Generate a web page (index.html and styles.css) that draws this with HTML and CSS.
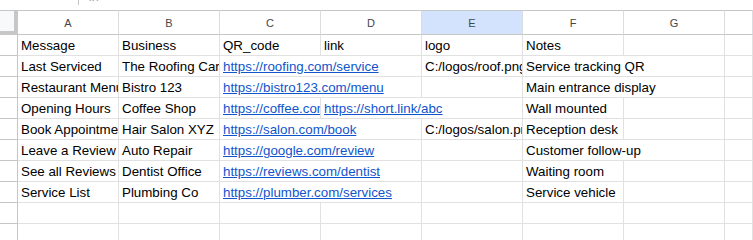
FILE: index.html
```html
<!DOCTYPE html>
<html lang="en">
<head>
    <meta charset="UTF-8">
    <title>Sheet</title>
    <link rel="stylesheet" href="styles.css">
</head>
<body>

    <!-- bottom edge of the formula bar -->
    <div class="formula-bar">
        <span class="divider"></span>
        <span class="fx">fx</span>
    </div>

    <div class="sheet">
        <!-- column headers -->
        <div class="corner"></div>
        <div class="col-head">A</div>
        <div class="col-head">B</div>
        <div class="col-head">C</div>
        <div class="col-head">D</div>
        <div class="col-head selected">E</div>
        <div class="col-head">F</div>
        <div class="col-head">G</div>
        <div class="col-head"></div>

        <!-- row 1 -->
        <div class="row-head"></div>
        <div class="cell">Message</div>
        <div class="cell">Business</div>
        <div class="cell">QR_code</div>
        <div class="cell">link</div>
        <div class="cell">logo</div>
        <div class="cell">Notes</div>
        <div class="cell"></div>
        <div class="cell"></div>

        <!-- row 2 -->
        <div class="row-head"></div>
        <div class="cell">Last Serviced</div>
        <div class="cell">The Roofing Care</div>
        <div class="cell wide"><a href="#">https://roofing.com/service</a></div>
        <div class="cell">C:/logos/roof.png</div>
        <div class="cell wide">Service tracking QR</div>
        <div class="cell"></div>

        <!-- row 3 -->
        <div class="row-head"></div>
        <div class="cell">Restaurant Menu</div>
        <div class="cell">Bistro 123</div>
        <div class="cell wide"><a href="#">https://bistro123.com/menu</a></div>
        <div class="cell"></div>
        <div class="cell wide">Main entrance display</div>
        <div class="cell"></div>

        <!-- row 4 -->
        <div class="row-head"></div>
        <div class="cell">Opening Hours</div>
        <div class="cell">Coffee Shop</div>
        <div class="cell"><a href="#">https://coffee.com/hours</a></div>
        <div class="cell wide"><a href="#">https://short.link/abc</a></div>
        <div class="cell">Wall mounted</div>
        <div class="cell"></div>
        <div class="cell"></div>

        <!-- row 5 -->
        <div class="row-head"></div>
        <div class="cell">Book Appointment</div>
        <div class="cell">Hair Salon XYZ</div>
        <div class="cell wide"><a href="#">https://salon.com/book</a></div>
        <div class="cell">C:/logos/salon.png</div>
        <div class="cell">Reception desk</div>
        <div class="cell"></div>
        <div class="cell"></div>

        <!-- row 6 -->
        <div class="row-head"></div>
        <div class="cell">Leave a Review</div>
        <div class="cell">Auto Repair</div>
        <div class="cell wide"><a href="#">https://google.com/review</a></div>
        <div class="cell"></div>
        <div class="cell wide">Customer follow-up</div>
        <div class="cell"></div>

        <!-- row 7 -->
        <div class="row-head"></div>
        <div class="cell">See all Reviews</div>
        <div class="cell">Dentist Office</div>
        <div class="cell wide"><a href="#">https://reviews.com/dentist</a></div>
        <div class="cell"></div>
        <div class="cell">Waiting room</div>
        <div class="cell"></div>
        <div class="cell"></div>

        <!-- row 8 -->
        <div class="row-head"></div>
        <div class="cell">Service List</div>
        <div class="cell">Plumbing Co</div>
        <div class="cell wide"><a href="#">https://plumber.com/services</a></div>
        <div class="cell"></div>
        <div class="cell">Service vehicle</div>
        <div class="cell"></div>
        <div class="cell"></div>

        <!-- empty rows -->
        <div class="row-head"></div>
        <div class="cell"></div><div class="cell"></div><div class="cell"></div><div class="cell"></div>
        <div class="cell"></div><div class="cell"></div><div class="cell"></div><div class="cell"></div>

        <div class="row-head"></div>
        <div class="cell"></div><div class="cell"></div><div class="cell"></div><div class="cell"></div>
        <div class="cell"></div><div class="cell"></div><div class="cell"></div><div class="cell"></div>
    </div>

</body>
</html>
```

FILE: styles.css
```css
body {
    margin: 0;
    padding: 0;
    background-color: #ffffff;
    font-family: 'Liberation Sans', Arial, sans-serif;
    overflow: hidden;
}

/* Formula bar (only its bottom edge is visible) */
.formula-bar {
    height: 10px;
    display: flex;
    align-items: flex-start;
    overflow: hidden;
}

.formula-bar .divider {
    width: 1px;
    height: 5px;
    margin-left: 78px;
    background-color: #c4c7c5;
}

.formula-bar .fx {
    margin-left: 10px;
    margin-top: -10px;
    font-size: 13px;
    line-height: 14px;
    font-style: italic;
    color: #a0a4a8;
}

/* Grid */
.sheet {
    display: grid;
    grid-template-columns: 18px repeat(7, 101px) 28px;
    grid-template-rows: 25px;
    grid-auto-rows: 21px;
    width: 753px;
}

.corner {
    box-sizing: border-box;
    border-top: 1px solid #c4c7c5;
    background-color: #f8f9fa;
    border-right: 4px solid #c7c7c7;
    border-bottom: 4px solid #c7c7c7;
}

.col-head {
    box-sizing: border-box;
    border-top: 1px solid #c4c7c5;
    border-right: 1px solid #dadcdf;
    border-bottom: 1px solid #c4c7c5;
    display: flex;
    justify-content: center;
    align-items: center;
    font-size: 11px;
    color: #444746;
    padding-top: 1px;
}

.col-head.selected {
    background-color: #d3e3fd;
}

.row-head {
    box-sizing: border-box;
    border-right: 1px solid #c4c7c5;
    border-bottom: 1px solid #c4c7c5;
}

.cell {
    box-sizing: border-box;
    border-right: 1px solid #e1e1e1;
    border-bottom: 1px solid #e1e1e1;
    padding: 0 3px 2px 3px;
    font-size: 13.33px;
    line-height: 15px;
    color: #000000;
    white-space: nowrap;
    overflow: hidden;
    display: flex;
    align-items: flex-end;
}

.cell.wide {
    grid-column: span 2;
}

.cell a {
    color: #1155cc;
    text-decoration: underline;
}
```
